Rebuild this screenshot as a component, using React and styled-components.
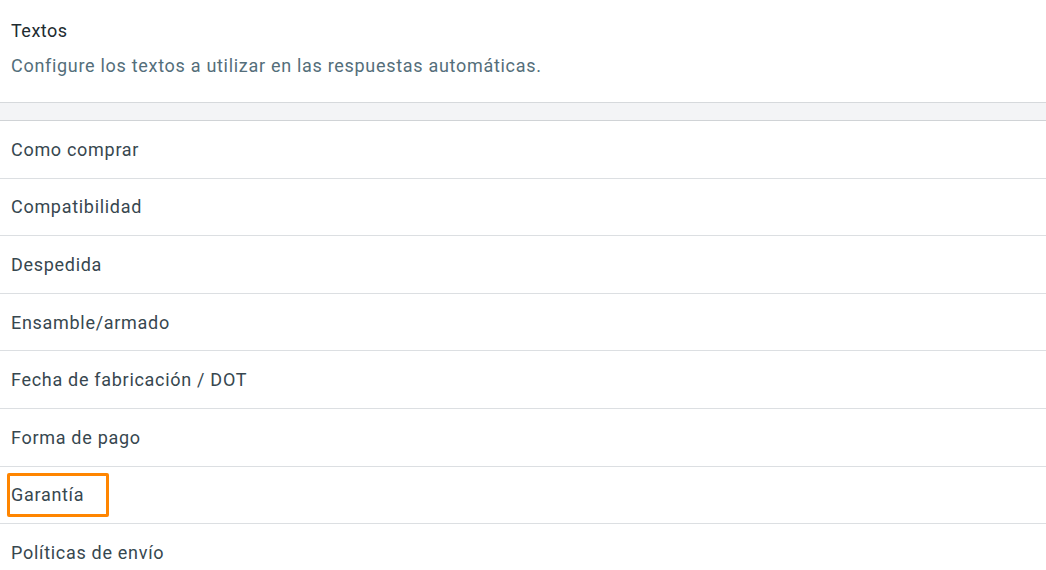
import React from "react";
import styled, { createGlobalStyle } from "styled-components";

const GlobalStyle = createGlobalStyle`
  body {
    margin: 0;
    background: #fff;
    font-family: Roboto, "Noto Sans", Arial, sans-serif;
  }
`;

const Page = styled.div`
  width: 1046px;
  height: 570px;
  overflow: hidden;
  background: #fff;
`;

const Header = styled.div`
  display: flex;
  flex-direction: column;
  gap: 11px;
  padding: 19px 11px 24px;
`;

const Title = styled.div`
  font-size: 18px;
  line-height: 24px;
  letter-spacing: 0.5px;
  color: #212b30;
`;

const Subtitle = styled.div`
  font-size: 18px;
  line-height: 24px;
  letter-spacing: 0.7px;
  color: #546e7a;
`;

const Band = styled.div`
  height: 17px;
  background: #f3f4f6;
  border-top: 1px solid #d6d9dc;
  border-bottom: 1px solid #d0d3d6;
`;

const List = styled.div`
  display: flex;
  flex-direction: column;
`;

const Row = styled.div`
  position: relative;
  display: flex;
  align-items: center;
  height: 57.6px;
  box-sizing: border-box;
  padding: 0 11px;
  border-bottom: 1px solid #dcdfe2;
  font-size: 18px;
  letter-spacing: 0.7px;
  color: #37474f;
`;

const Highlight = styled.span`
  position: absolute;
  left: 7px;
  top: 6px;
  width: 102px;
  height: 44px;
  box-sizing: border-box;
  border: 3px solid #ff8500;
  border-radius: 2px;
  pointer-events: none;
`;

const items = [
  "Como comprar",
  "Compatibilidad",
  "Despedida",
  "Ensamble/armado",
  "Fecha de fabricación / DOT",
  "Forma de pago",
  "Garantía",
  "Políticas de envío",
];

export default function App() {
  return (
    <Page>
      <GlobalStyle />
      <Header>
        <Title>Textos</Title>
        <Subtitle>Configure los textos a utilizar en las respuestas automáticas.</Subtitle>
      </Header>
      <Band />
      <List>
        {items.map((item) => (
          <Row key={item}>
            {item}
            {item === "Garantía" && <Highlight />}
          </Row>
        ))}
      </List>
    </Page>
  );
}
